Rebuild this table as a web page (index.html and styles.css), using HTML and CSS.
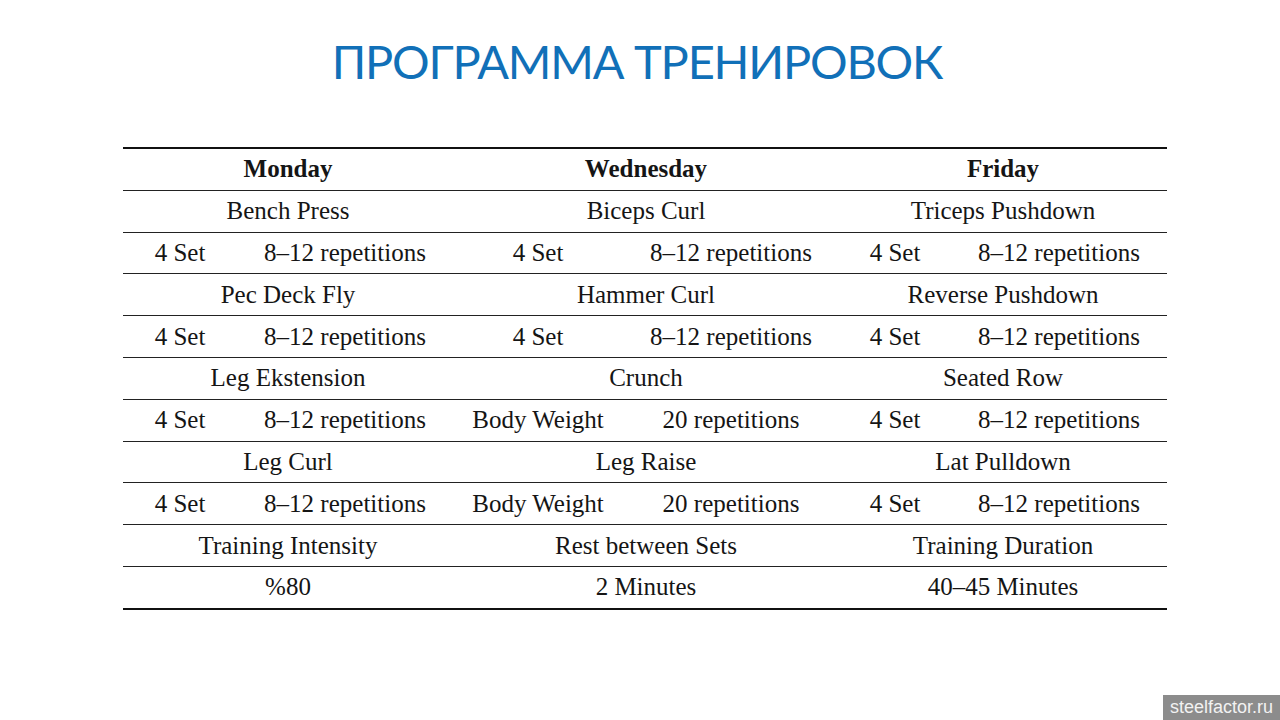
FILE: index.html
```html
<!DOCTYPE html>
<html lang="ru">
<head>
<meta charset="utf-8">
<title>Программа тренировок</title>
<link rel="stylesheet" href="styles.css">
</head>
<body>
<div class="slide">
  <h1 class="title">ПРОГРАММА ТРЕНИРОВОК</h1>
  <div class="plan">
    <div class="row head">
      <div class="cell span">Monday</div>
      <div class="cell span">Wednesday</div>
      <div class="cell span">Friday</div>
    </div>
    <div class="row">
      <div class="cell span">Bench Press</div>
      <div class="cell span">Biceps Curl</div>
      <div class="cell span">Triceps Pushdown</div>
    </div>
    <div class="row">
      <div class="cell">4 Set</div><div class="cell">8–12 repetitions</div>
      <div class="cell">4 Set</div><div class="cell">8–12 repetitions</div>
      <div class="cell">4 Set</div><div class="cell">8–12 repetitions</div>
    </div>
    <div class="row">
      <div class="cell span">Pec Deck Fly</div>
      <div class="cell span">Hammer Curl</div>
      <div class="cell span">Reverse Pushdown</div>
    </div>
    <div class="row">
      <div class="cell">4 Set</div><div class="cell">8–12 repetitions</div>
      <div class="cell">4 Set</div><div class="cell">8–12 repetitions</div>
      <div class="cell">4 Set</div><div class="cell">8–12 repetitions</div>
    </div>
    <div class="row">
      <div class="cell span">Leg Ekstension</div>
      <div class="cell span">Crunch</div>
      <div class="cell span">Seated Row</div>
    </div>
    <div class="row">
      <div class="cell">4 Set</div><div class="cell">8–12 repetitions</div>
      <div class="cell">Body Weight</div><div class="cell">20 repetitions</div>
      <div class="cell">4 Set</div><div class="cell">8–12 repetitions</div>
    </div>
    <div class="row">
      <div class="cell span">Leg Curl</div>
      <div class="cell span">Leg Raise</div>
      <div class="cell span">Lat Pulldown</div>
    </div>
    <div class="row">
      <div class="cell">4 Set</div><div class="cell">8–12 repetitions</div>
      <div class="cell">Body Weight</div><div class="cell">20 repetitions</div>
      <div class="cell">4 Set</div><div class="cell">8–12 repetitions</div>
    </div>
    <div class="row">
      <div class="cell span">Training Intensity</div>
      <div class="cell span">Rest between Sets</div>
      <div class="cell span">Training Duration</div>
    </div>
    <div class="row">
      <div class="cell span">%80</div>
      <div class="cell span">2 Minutes</div>
      <div class="cell span">40–45 Minutes</div>
    </div>
  </div>
  <div class="watermark">steelfactor.ru</div>
</div>
</body>
</html>
```

FILE: styles.css
```css
html, body {
  margin: 0;
  padding: 0;
  background: #ffffff;
}

.slide {
  position: relative;
  width: 1280px;
  height: 720px;
  overflow: hidden;
  background: #ffffff;
}

.title {
  margin: 0;
  padding-top: 31px;
  height: 116px;
  box-sizing: border-box;
  text-align: center;
  font-family: Lato, "Open Sans", sans-serif;
  font-weight: 400;
  font-size: 47px;
  letter-spacing: -1.2px;
  line-height: 60px;
  color: #1170b8;
  padding-right: 6px;
}

.plan {
  margin-top: 31px;
  margin-left: 123px;
  width: 1044px;
  border-top: 2px solid #111;
  border-bottom: 2px solid #111;
  font-family: "Liberation Serif", "Times New Roman", serif;
  font-size: 25px;
  color: #151515;
}

.row {
  display: grid;
  grid-template-columns: 114px 216px 170px 216px 112px 216px;
  height: 40.8px;
  border-bottom: 1px solid #222;
}

.row:last-child {
  border-bottom: none;
}

.cell {
  display: flex;
  align-items: center;
  justify-content: center;
  white-space: nowrap;
}

.cell.span {
  grid-column: span 2;
}

.head .cell {
  font-weight: 700;
}

.watermark {
  position: absolute;
  right: 0;
  bottom: 0;
  width: 117px;
  height: 25px;
  background: #8c8c8c;
  color: #f2f2f2;
  font-family: "Liberation Sans", Arial, sans-serif;
  font-size: 18px;
  line-height: 25px;
  text-align: center;
}
```
